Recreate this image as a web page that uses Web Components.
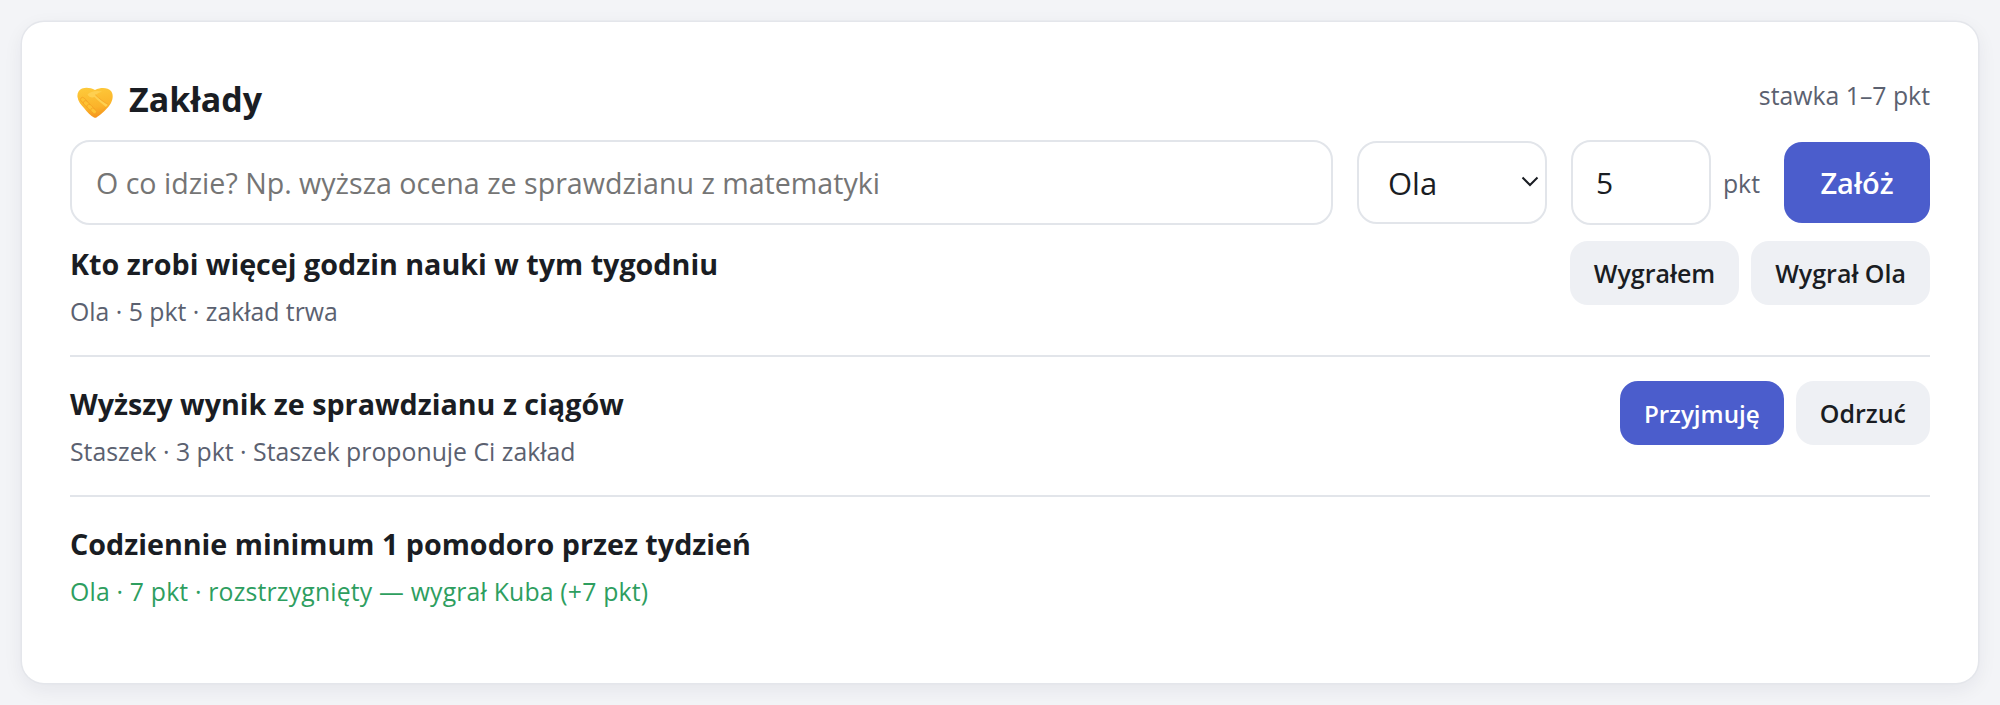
<!doctype html>
<html lang="pl">
<head>
<meta charset="utf-8">
<title>Zakłady</title>
<style>
    html, body { margin: 0; background: #f3f4f7; }
    body { padding: 22px; font-family: "Open Sans", "Liberation Sans", sans-serif; color: #1a1d23; }
</style>
</head>
<body>
<bets-card>
    <span slot="title">Zakłady</span>
    <span slot="note">stawka 1–7 pkt</span>
    <bet-form></bet-form>
    <bet-row heading="Kto zrobi więcej godzin nauki w tym tygodniu" meta="Ola · 5 pkt · zakład trwa">
        <bet-button>Wygrałem</bet-button>
        <bet-button>Wygrał Ola</bet-button>
    </bet-row>
    <bet-row heading="Wyższy wynik ze sprawdzianu z ciągów" meta="Staszek · 3 pkt · Staszek proponuje Ci zakład">
        <bet-button primary>Przyjmuję</bet-button>
        <bet-button>Odrzuć</bet-button>
    </bet-row>
    <bet-row heading="Codziennie minimum 1 pomodoro przez tydzień" meta="Ola · 7 pkt · rozstrzygnięty — wygrał Kuba (+7 pkt)" won></bet-row>
</bets-card>

<script>
const cardTemplate = document.createElement('template');
cardTemplate.innerHTML = `
    <style>
        :host {
            display: block;
            box-sizing: border-box;
            height: 661px;
            padding: 48px;
            background: #fff;
            border-radius: 22px;
            box-shadow: 0 0 0 1.5px #e4e6eb, 0 6px 20px rgba(30, 35, 50, 0.07);
        }
        header {
            display: flex;
            align-items: center;
            justify-content: space-between;
            height: 54px;
            margin-bottom: 16px;
        }
        h2 {
            display: flex;
            align-items: center;
            gap: 16px;
            margin: 4px 0 0;
            padding-left: 7px;
            font-size: 34px;
            font-weight: 700;
            color: #1a1d23;
        }
        svg { width: 36px; height: 31px; display: block; margin-top: 6px; }
        .note { font-size: 24.8px; color: #5b6170; margin-top: -5px; }
    </style>
    <header>
        <h2>
            <svg viewBox="0 0 36 31" aria-hidden="true">
                <defs>
                    <linearGradient id="skin" x1="0.35" y1="0" x2="0.55" y2="1">
                        <stop offset="0" stop-color="#fdc93a"/>
                        <stop offset="0.65" stop-color="#fbb32a"/>
                        <stop offset="1" stop-color="#f5921c"/>
                    </linearGradient>
                </defs>
                <path fill="url(#skin)" d="M18 3C14 .7 9 0 5 1.500 1.500 3 0 6.500.5 10c.5 4 3.500 8 6.500 11 3 4 7 8 10 9.500 1 .5 2 .5 3-.5 5-3 11-9 14-14 2-4 2.500-9 0-12C31 .5 24 0 18 3Z"/>
                <path fill="#fed050" d="M10.500 7.500C13 4.500 19 3 25 4.500c-2 1-5 2-6.500 3.500 3.500 3.500 8 7 12.500 9.500L29 20c-4-3-8.500-7-11.500-10-2.500 1-5.500.5-7-2.500Z"/>
                <path fill="none" stroke="#f4a224" stroke-width=".7" stroke-linecap="round" d="M18.500 8c3.500 3.500 8 7 12.500 9.500M29 20l-3 3M25.500 23l-3.500 3.500"/>
                <g fill="#fdc233" stroke="#f29a20" stroke-width=".6">
                    <rect x="3" y="11.500" width="7.500" height="4.200" rx="2.100" transform="rotate(42 6.750 13.600)"/>
                    <rect x="5.800" y="15" width="8" height="4.200" rx="2.100" transform="rotate(42 9.800 17.100)"/>
                    <rect x="9.400" y="18.500" width="8" height="4.200" rx="2.100" transform="rotate(42 13.400 20.600)"/>
                    <rect x="13.400" y="22" width="6.500" height="3.800" rx="1.900" transform="rotate(42 16.650 23.900)"/>
                </g>
            </svg>
            <slot name="title"></slot>
        </h2>
        <span class="note"><slot name="note"></slot></span>
    </header>
    <slot></slot>
`;

class BetsCard extends HTMLElement {
    constructor() {
        super();
        this.attachShadow({ mode: 'open' });
        this.shadowRoot.appendChild(cardTemplate.content.cloneNode(true));
    }
}
customElements.define('bets-card', BetsCard);

const formTemplate = document.createElement('template');
formTemplate.innerHTML = `
    <style>
        :host {
            display: flex;
            align-items: center;
            gap: 24px;
            margin-bottom: 16px;
        }
        input, select {
            box-sizing: border-box;
            height: 85px;
            border: 2px solid #e2e5ea;
            border-radius: 20px;
            background: #fff;
            font: 400 28.6px "Open Sans", "Liberation Sans", sans-serif;
            color: #1a1d23;
            outline: none;
        }
        .what { flex: 1; min-width: 0; padding: 0 24px; }
        .what::placeholder { color: #757575; opacity: 1; }
        .pick { position: relative; display: block; width: 190px; height: 83px; }
        select {
            display: block;
            width: 100%;
            height: 100%;
            padding: 0 29px;
            font-size: 31px;
            appearance: none;
            -webkit-appearance: none;
        }
        .pick svg {
            position: absolute;
            right: 8px;
            top: 34px;
            width: 18px;
            height: 12px;
            pointer-events: none;
        }
        .stake { display: flex; align-items: center; gap: 12px; }
        .stake input {
            width: 140px;
            padding: 0 23px;
            font-size: 30px;
            appearance: textfield;
            -moz-appearance: textfield;
        }
        .stake span { font-size: 24.8px; color: #5b6170; margin-right: 12px; }
        bet-button { --btn-height: 81px; --btn-size: 29px; --btn-width: 146px; }
    </style>
    <input class="what" type="text" placeholder="O co idzie? Np. wyższa ocena ze sprawdzianu z matematyki">
    <label class="pick">
        <select>
            <option>Ola</option>
            <option>Staszek</option>
            <option>Kuba</option>
        </select>
        <svg viewBox="0 0 18 12"><path d="M1.500 2.500 9 10 16.500 2.500" fill="none" stroke="#1a1d23" stroke-width="2"/></svg>
    </label>
    <div class="stake">
        <input type="number" min="1" max="7" value="5">
        <span>pkt</span>
        <bet-button primary>Załóż</bet-button>
    </div>
`;

class BetForm extends HTMLElement {
    constructor() {
        super();
        this.attachShadow({ mode: 'open' });
        this.shadowRoot.appendChild(formTemplate.content.cloneNode(true));
    }
}

const buttonTemplate = document.createElement('template');
buttonTemplate.innerHTML = `
    <style>
        :host { display: block; }
        button {
            box-sizing: border-box;
            display: flex;
            align-items: center;
            justify-content: center;
            height: var(--btn-height, 64px);
            min-width: var(--btn-width, 0);
            padding: 0 24px;
            border: 0;
            border-radius: 18px;
            background: #eef0f4;
            color: #1a1d23;
            font: 600 var(--btn-size, 25px) "Open Sans", "Liberation Sans", sans-serif;
        }
        :host([primary]) button { background: #4b5dcc; color: #fff; font-size: var(--btn-size, 24.2px); }
    </style>
    <button type="button"><slot></slot></button>
`;

class BetButton extends HTMLElement {
    constructor() {
        super();
        this.attachShadow({ mode: 'open' });
        this.shadowRoot.appendChild(buttonTemplate.content.cloneNode(true));
    }
}
customElements.define('bet-button', BetButton);
customElements.define('bet-form', BetForm);

const rowTemplate = document.createElement('template');
rowTemplate.innerHTML = `
    <style>
        :host {
            display: flex;
            justify-content: space-between;
            align-items: flex-start;
            gap: 24px;
            height: 90px;
            padding: 24px 0;
            border-bottom: 2px solid #e2e5ea;
        }
        :host(:first-of-type) { padding-top: 0; }
        :host(:last-of-type) { border-bottom: 0; }
        .title { font-size: 28.7px; font-weight: 700; line-height: 38px; margin-top: 4px; color: #1a1d23; }
        .meta { font-size: 24.8px; line-height: 30px; margin-top: 13px; color: #5b6170; }
        :host([won]) .meta { color: #2e9e5f; letter-spacing: 0.18px; }
        .actions { display: flex; gap: 12px; }
    </style>
    <div>
        <div class="title"></div>
        <div class="meta"></div>
    </div>
    <div class="actions"><slot></slot></div>
`;

class BetRow extends HTMLElement {
    constructor() {
        super();
        this.attachShadow({ mode: 'open' });
        this.shadowRoot.appendChild(rowTemplate.content.cloneNode(true));
        this.shadowRoot.querySelector('.title').textContent = this.getAttribute('heading');
        this.shadowRoot.querySelector('.meta').textContent = this.getAttribute('meta');
    }
}
customElements.define('bet-row', BetRow);
</script>
</body>
</html>
